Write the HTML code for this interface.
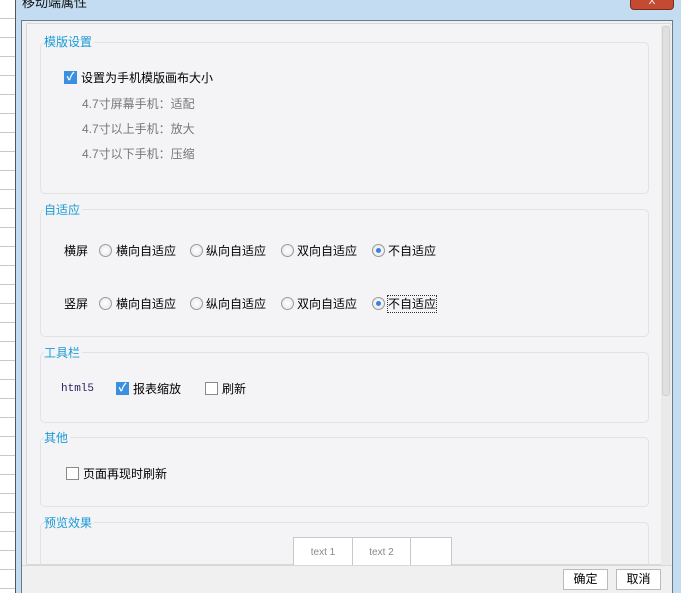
<!DOCTYPE html>
<html><head><meta charset="utf-8"><style>
*{margin:0;padding:0;box-sizing:border-box}
body{width:681px;height:593px;overflow:hidden;position:relative;background:#f0f0f0;font-family:"Liberation Sans","Noto Sans CJK SC",sans-serif;font-size:12px;line-height:16px;color:#000}
.a{position:absolute}
.grid{left:0;top:0;width:15px;height:593px;background:repeating-linear-gradient(#fff 0 18px,#c8c8c8 18px 19px)}
.frame{left:15px;top:0;width:666px;height:593px;background:#c4dcf2;border-left:1px solid #555}
.title{left:22px;top:-5px;font-size:13px;color:#111}
.close{left:630px;top:-4px;width:44px;height:14px;background:#c44a32;border:1px solid #7a2a1a;border-radius:0 0 4px 4px;color:#fff;font-size:10px;text-align:center;line-height:10px}
.panel{left:21px;top:20px;width:652px;height:573px;background:#f0f0f0;border:1px solid #6a7a8a}
.inner{left:26px;top:23px;width:645px;height:542px;background:#f4f4f6;border:1px solid #d8d8d8}
.sb{left:661px;top:25px;width:10px;height:540px;background:#eaeaea}
.thumb{left:662px;top:26px;width:8px;height:370px;background:#e0e0e0;border:1px solid #d0d0d0;border-radius:3px}
.box{border:1px solid #e2e2e4;border-radius:5px}
.lbl{color:#1a9ad6;background:#f4f4f6;padding-right:2px;font-size:12px;line-height:14px}
.g{color:#777}
.cb{width:13px;height:13px;border:1px solid #8a8a8a;background:#fff}
.cb.on{background:#3b8fe0;border-color:#3b8fe0;color:#fff;font-size:11px;line-height:11px;text-align:center;font-weight:bold}
.rd{width:13px;height:13px;border-radius:50%;border:1px solid #999;background:radial-gradient(#fff,#e4e4e4)}
.rd.on::after{content:"";position:absolute;left:3px;top:3px;width:5px;height:5px;border-radius:50%;background:#3b7ee8}
.btn{width:45px;height:21px;border:1px solid #bbb;background:#fff;text-align:center;line-height:19px}
.cell{top:537px;height:28px;border:1px solid #c8c8c8;border-bottom:none;background:#fff;color:#888;font-size:10px;text-align:center;line-height:30px}
</style></head><body>
<div class="a grid"></div>
<div class="a frame"></div>
<div class="a title">移动端属性</div>
<div class="a close">X</div>
<div class="a panel"></div>
<div class="a inner"></div>
<div class="a sb"></div><div class="a thumb"></div>

<div class="a box" style="left:40px;top:42px;width:609px;height:152px"></div>
<div class="a lbl" style="left:44px;top:35px">模版设置</div>
<div class="a cb on" style="left:64px;top:71px">✓</div>
<div class="a" style="left:81px;top:70px">设置为手机模版画布大小</div>
<div class="a g" style="left:82px;top:96px">4.7寸屏幕手机：适配</div>
<div class="a g" style="left:82px;top:121px">4.7寸以上手机：放大</div>
<div class="a g" style="left:82px;top:146px">4.7寸以下手机：压缩</div>

<div class="a box" style="left:40px;top:209px;width:609px;height:128px"></div>
<div class="a lbl" style="left:44px;top:203px">自适应</div>
<div class="a" style="left:64px;top:243px">横屏</div>
<div class="a rd" style="left:99px;top:244px"></div><div class="a" style="left:116px;top:243px">横向自适应</div>
<div class="a rd" style="left:190px;top:244px"></div><div class="a" style="left:206px;top:243px">纵向自适应</div>
<div class="a rd" style="left:281px;top:244px"></div><div class="a" style="left:297px;top:243px">双向自适应</div>
<div class="a rd on" style="left:372px;top:244px"></div><div class="a" style="left:388px;top:243px">不自适应</div>
<div class="a" style="left:64px;top:296px">竖屏</div>
<div class="a rd" style="left:99px;top:297px"></div><div class="a" style="left:116px;top:296px">横向自适应</div>
<div class="a rd" style="left:190px;top:297px"></div><div class="a" style="left:206px;top:296px">纵向自适应</div>
<div class="a rd" style="left:281px;top:297px"></div><div class="a" style="left:297px;top:296px">双向自适应</div>
<div class="a rd on" style="left:372px;top:297px"></div><div class="a" style="left:388px;top:296px;outline:1px dotted #333">不自适应</div>

<div class="a box" style="left:40px;top:352px;width:609px;height:71px"></div>
<div class="a lbl" style="left:44px;top:346px">工具栏</div>
<div class="a" style="left:61px;top:381px;font-family:'Liberation Mono',monospace;font-size:11px;color:#302060">html5</div>
<div class="a cb on" style="left:116px;top:382px">✓</div><div class="a" style="left:133px;top:381px">报表缩放</div>
<div class="a cb" style="left:205px;top:382px"></div><div class="a" style="left:222px;top:381px">刷新</div>

<div class="a box" style="left:40px;top:437px;width:609px;height:70px"></div>
<div class="a lbl" style="left:44px;top:431px">其他</div>
<div class="a cb" style="left:66px;top:467px"></div><div class="a" style="left:83px;top:466px">页面再现时刷新</div>

<div class="a box" style="left:40px;top:522px;width:609px;height:60px"></div>
<div class="a lbl" style="left:44px;top:516px">预览效果</div>
<div class="a cell" style="left:293px;width:60px">text 1</div>
<div class="a cell" style="left:352px;width:59px">text 2</div>
<div class="a cell" style="left:410px;width:42px"></div>
<div class="a" style="left:22px;top:565px;width:650px;height:28px;background:#f0f0f0;border-top:1px solid #d8d8d8"></div>
<div class="a btn" style="left:563px;top:569px">确定</div>
<div class="a btn" style="left:616px;top:569px">取消</div>
</body></html>
